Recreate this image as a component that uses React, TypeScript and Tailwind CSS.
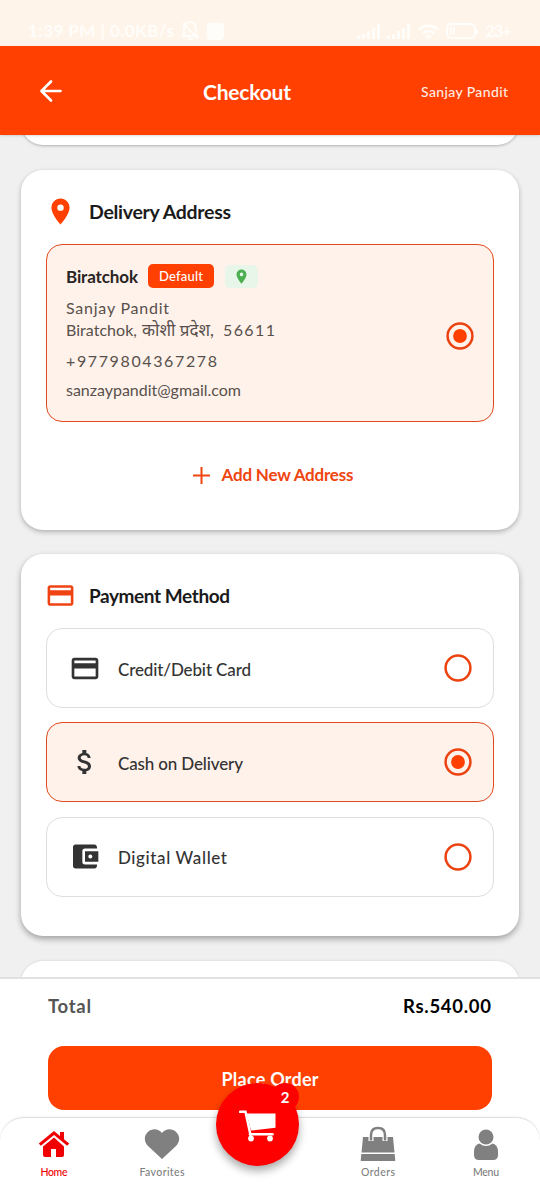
import { useLayoutEffect, useRef, useState } from "react";
import type { ReactNode } from "react";
import {
  MdLocationOn,
  MdCreditCard,
  MdAttachMoney,
  MdAccountBalanceWallet,
  MdWifi,
} from "react-icons/md";

/* A single line of text whose letter spacing is adjusted to fill w pixels. */
function T({ w, className, children }: { w: number; className: string; children: string }) {
  const ref = useRef<HTMLSpanElement>(null);
  const [spacing, setSpacing] = useState(0);
  useLayoutEffect(() => {
    if (ref.current) {
      const natural = ref.current.getBoundingClientRect().width;
      setSpacing((w - natural) / (children.length - 1));
    }
  }, [w, children]);
  return (
    <span className="block h-7 shrink-0 whitespace-nowrap" style={{ width: w }}>
      <span ref={ref} className={className} style={{ letterSpacing: spacing }}>
        {children}
      </span>
    </span>
  );
}

function Radio({ on }: { on?: boolean }) {
  return (
    <svg width="28" height="28" viewBox="0 0 28 28" className="shrink-0" fill="none">
      <circle cx="14" cy="14" r="12.4" stroke="#ec4210" strokeWidth="2.5" />
      {on && <circle cx="14" cy="14" r="6.9" fill="#ff4000" />}
    </svg>
  );
}

function Option({ icon, label, w, on }: { icon: ReactNode; label: string; w: number; on?: boolean }) {
  return (
    <div
      className={
        on
          ? "flex h-20 items-center rounded-2xl border border-[#e04a1e] bg-[#fff2ea] pr-[21px] pl-[23px]"
          : "flex h-20 items-center rounded-2xl border border-[#dedede] bg-white pr-[21px] pl-[23px]"
      }
    >
      <span className="mr-4 flex w-8 text-[#333]">{icon}</span>
      <span className="flex-1 pt-[3px] text-[#333]">
        <T w={w} className="text-[17px]/7 font-medium">{label}</T>
      </span>
      <Radio on={on} />
    </div>
  );
}

function Tab({ icon, label, w, red }: { icon: ReactNode; label: string; w: number; red?: boolean }) {
  return (
    <div className={red ? "flex w-[108px] flex-col items-center text-[#f00000]" : "flex w-[108px] flex-col items-center text-[#808080]"}>
      <span className="flex h-10 items-center justify-center">{icon}</span>
      <span className="-mt-1.5"><T w={w} className="text-[10.5px]/7 font-medium">{label}</T></span>
    </div>
  );
}

function Signal() {
  return (
    <svg width="24" height="16" fill="currentColor">
      <path d="M0 13h3v3H0zM5 11h3v5H5zM10 8h3v8h-3zM15 5h3v11h-3zM20 1h3v15h-3z" />
    </svg>
  );
}

export default function App() {
  return (
    <div className="relative flex h-[1200px] w-[540px] flex-col overflow-hidden bg-[#f0f0f0] font-['Lato','Noto_Sans',sans-serif]">
      <div className="flex h-[46px] shrink-0 items-center justify-between bg-[#fff4e9] px-7 pt-4 text-[#fffdfa]">
        <div className="flex items-center gap-1.5">
          <T w={146} className="text-[17px]/7 font-bold">1:39 PM | 0.0KB/s</T>
          <svg width="21" height="20" viewBox="0 0 21 20" fill="none" stroke="currentColor" strokeWidth="2">
            <path d="M4 14V7a6 6 0 0 1 12 0v7M2 15h17M3 2l15 16M8 18h5" />
          </svg>
          <span className="size-[17px] rounded-sm bg-[#fffdfa]" />
        </div>
        <div className="flex items-center gap-1.5">
          <Signal />
          <Signal />
          <MdWifi size={23} />
          <svg width="33" height="16" fill="none" stroke="currentColor" strokeWidth="2">
            <rect x="1" y="1" width="28" height="14" rx="4" />
            <path d="M31 6v5M5 4v8M8 4v8" />
          </svg>
          <T w={27} className="text-[17px]/7 font-bold">23+</T>
        </div>
      </div>

      <header className="relative z-10 flex h-[89px] shrink-0 items-center bg-[#ff4000] pr-8 pl-[39px] text-white shadow-sm">
        <svg width="24" height="24" viewBox="0 0 24 24" className="mr-[140px]" fill="none" stroke="currentColor" strokeWidth="2.7" strokeLinecap="round" strokeLinejoin="round">
          <path d="M12 2.500 2.500 12l9.500 9.500M3 12h18.500" />
        </svg>
        <div className="pt-0.5"><T w={88} className="text-[21px]/7 font-bold">Checkout</T></div>
        <div className="ml-auto pt-0.5 text-[#ffece4]"><T w={87} className="text-[14px]/7 font-medium">Sanjay Pandit</T></div>
      </header>

      <main className="flex h-[842px] shrink-0 flex-col overflow-hidden px-[21px]">
        <div className="-mt-5 h-[30px] shrink-0 rounded-b-[22px] bg-white shadow-[0_1px_3px_#0004]" />

        <section className="mt-[25px] h-[360px] shrink-0 rounded-[22px] bg-white px-[25px] shadow-[0_2px_5px_#0004]">
          <div className="flex h-[74px] items-center pt-2 text-[#1b1b1b]">
            <MdLocationOn size={31} className="mr-[13px] -ml-px text-[#ff4000]" />
            <span className="pt-0.5"><T w={142} className="text-[19.5px]/7 font-bold">Delivery Address</T></span>
          </div>
          <div className="flex h-[178px] items-center rounded-2xl border border-[#e04a1e] bg-[#fff2ea] px-[19px]">
            <div className="flex h-full flex-1 flex-col pt-[18px] text-[#58504c]">
              <div className="flex h-[26px] items-center text-[#292423]">
                <span className="pt-0.5"><T w={72} className="text-[17px]/7 font-bold">Biratchok</T></span>
                <span className="ml-2.5 flex h-6 w-[66px] items-center justify-center rounded-[5px] bg-[#ff4000] text-white">
                  <T w={44} className="text-[13px]/7 font-medium">Default</T>
                </span>
                <span className="ml-[11px] flex h-[23px] w-[33px] items-center justify-center rounded-[5px] bg-[#e8f5e9] text-[#4caf50]"><MdLocationOn size={17} /></span>
              </div>
              <div className="mt-[5px] h-[22px]"><T w={103} className="text-[16px]/7">Sanjay Pandit</T></div>
              <div className="flex h-[31px]">
                <T w={71} className="text-[16px]/7">Biratchok,</T>
                <span className="ml-[5px] block h-7 w-[74px] text-[17px]/7 whitespace-nowrap">कोशी प्रदेश,</span>
                <span className="ml-[7px]"><T w={52} className="text-[16px]/7">56611</T></span>
              </div>
              <div className="h-[29px]"><T w={151} className="text-[16px]/7">+9779804367278</T></div>
              <div><T w={175} className="text-[16px]/7">sanzaypandit@gmail.com</T></div>
            </div>
            <div className="pt-[5px]"><Radio on /></div>
          </div>
          <div className="mt-[39px] flex h-7 items-center justify-center gap-3 pl-1.5 text-[#ef4511]">
            <svg width="17" height="17" viewBox="0 0 17 17" fill="none" stroke="currentColor" strokeWidth="2"><path d="M8.500 0v17M0 8.500h17" /></svg>
            <T w={132} className="text-[17px]/7 font-bold">Add New Address</T>
          </div>
        </section>

        <section className="mt-6 h-[382px] shrink-0 rounded-[22px] bg-white px-[25px] shadow-[0_3px_6px_#0005]">
          <div className="flex h-[74px] items-center pt-2 text-[#1b1b1b]">
            <MdCreditCard size={31} className="mr-[13px] -ml-px text-[#f04313]" />
            <span className="pt-0.5"><T w={141} className="text-[19px]/7 font-bold">Payment Method</T></span>
          </div>
          <div className="flex flex-col gap-[14.4px]">
            <Option icon={<MdCreditCard size={33} className="-translate-x-px" />} label="Credit/Debit Card" w={133} />
            <Option icon={<MdAttachMoney size={34} className="-translate-x-px" />} label="Cash on Delivery" w={125} on />
            <Option icon={<MdAccountBalanceWallet size={33} className="-translate-x-px" />} label="Digital Wallet" w={109} />
          </div>
        </section>
        <div className="mt-[25px] h-10 shrink-0 rounded-t-[22px] bg-white shadow-[0_0_3px_#0002]" />
      </main>

      <section className="h-[140px] shrink-0 border-t-2 border-[#e1e1e1] bg-white px-12">
        <div className="flex h-[67px] items-center justify-between pb-3.5">
          <span className="text-[#555]"><T w={43} className="text-[18.5px]/7 font-bold">Total</T></span>
          <span className="-translate-x-px text-black"><T w={88} className="text-[18.5px]/7 font-bold">Rs.540.00</T></span>
        </div>
        <button className="flex h-16 w-full items-center justify-center rounded-2xl bg-[#ff4000] pt-0.5 text-white">
          <T w={97} className="text-left text-[18px]/7 font-bold">Place Order</T>
        </button>
      </section>

      <div className="shrink-0 bg-white">
        <nav className="flex h-[83px] items-start justify-between rounded-t-[24px] border-t border-[#e0e0e0] bg-white pt-1.5 shadow-[0_0_3px_#00000012]">
          <Tab red label="Home" w={27} icon={<svg width="32" height="28" viewBox="0 0 32 28" fill="currentColor"><path d="M16 1 .8 13.500l2 2.200L16 5l13.200 10.700 2-2.200-5.200-4.300V2h-4v4zM5 16.500v8.500q0 2 2 2h6v-8h5v8h6q2 0 2-2v-8.500L16 7.500z" /></svg>} />
          <Tab label="Favorites" w={45} icon={<svg width="36" height="31" viewBox="0 0 36 31" fill="currentColor"><path d="M18 30 4 17C-6 6 10-6 18 4c8-10 24 2 14 13z" /></svg>} />
          <div className="w-[108px]" />
          <Tab label="Orders" w={34} icon={<svg width="36" height="36" viewBox="0 0 36 36" fill="none"><path d="M3 11h30l1.500 15.500h-33zM1.300 28h33.400l.6 7H.7z" fill="currentColor" /><path d="M11 15V9q0-7 7-7t7 7v6" stroke="white" strokeWidth="5" /><path d="M11 14.500V9q0-7 7-7t7 7v5.500" stroke="currentColor" strokeWidth="2.500" /></svg>} />
          <Tab label="Menu" w={26} icon={<svg width="26" height="31" viewBox="0 0 26 31" fill="currentColor"><circle cx="13" cy="8" r="7.500" /><path d="M6.500 14.500q6.500 5 13 0Q25 15.500 25 23v3q0 5-5 5H6q-5 0-5-5v-3q0-7.500 5.500-8.500z" /></svg>} />
        </nav>
      </div>

      <div className="absolute top-[1083px] left-[216px] flex size-[83px] items-center justify-center rounded-full bg-[#ff0000] text-white shadow-[0_5px_9px_#0005]">
        <svg width="38" height="34" viewBox="0 0 38 34" fill="none" stroke="currentColor">
          <path d="M1 3.800h5.500L11.500 27" strokeWidth="2.500" strokeLinecap="round" />
          <path d="M7.500 5.500h29v14.200L12 22.500z" fill="currentColor" stroke="none" />
          <path d="M11 26.200h22.500" strokeWidth="2.500" strokeLinecap="round" />
          <circle cx="12" cy="30.500" r="2.900" fill="currentColor" stroke="none" />
          <circle cx="31" cy="30.500" r="2.900" fill="currentColor" stroke="none" />
        </svg>
        <span className="absolute top-0 right-0 flex size-7 items-center justify-center rounded-full bg-[#ff0000] text-[15px] font-bold">2</span>
      </div>
    </div>
  );
}
